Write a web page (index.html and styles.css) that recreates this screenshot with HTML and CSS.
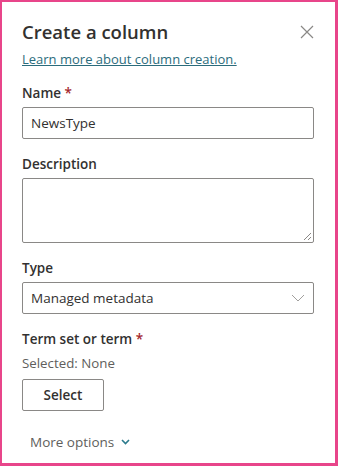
FILE: index.html
```html
<!DOCTYPE html>
<html lang="en">
<head>
    <meta charset="UTF-8">
    <meta name="viewport" content="width=device-width, initial-scale=1.0">
    <title>Create a column</title>
    <link rel="stylesheet" href="styles.css">
</head>
<body>
    <div class="frame">
        <div class="panel">
            <div class="header">
                <h1>Create a column</h1>
                <button class="close" aria-label="Close">
                    <svg width="14" height="14" viewBox="0 0 14 14">
                        <path d="M1 1 L13 13 M13 1 L1 13" stroke="#8a8886" stroke-width="1.2" fill="none"/>
                    </svg>
                </button>
            </div>
            <a class="learn" href="#">Learn more about column creation.</a>

            <label class="field-label">Name <span class="req">*</span></label>
            <div class="input">NewsType</div>

            <label class="field-label">Description</label>
            <div class="textarea">
                <svg class="grip" width="9" height="9" viewBox="0 0 9 9">
                    <path d="M8 1 L1 8 M8 5 L5 8" stroke="#8a8886" stroke-width="1" fill="none"/>
                </svg>
            </div>

            <label class="field-label">Type</label>
            <div class="dropdown">
                <span>Managed metadata</span>
                <svg width="14" height="8" viewBox="0 0 14 8">
                    <path d="M1 1 L7 7 L13 1" stroke="#a19f9d" stroke-width="1" fill="none"/>
                </svg>
            </div>

            <label class="field-label">Term set or term <span class="req">*</span></label>
            <p class="selected">Selected: None</p>
            <button class="select-btn">Select</button>

            <button class="more">
                More options
                <svg width="9" height="6" viewBox="0 0 9 6">
                    <path d="M1 1 L4.5 4.5 L8 1" stroke="#2b7a8c" stroke-width="1.6" fill="none"/>
                </svg>
            </button>
        </div>
    </div>
</body>
</html>
```

FILE: styles.css
```css
html, body {
    margin: 0;
    padding: 0;
    height: 100%;
}

body {
    font-family: 'Open Sans', 'Noto Sans', Arial, sans-serif;
    color: #323130;
    background: #fff;
}

.frame {
    box-sizing: border-box;
    height: 466px;
    width: 338px;
    border-style: solid;
    border-color: #e8458a;
    border-width: 2px 3px 3px 2px;
    overflow: hidden;
}

.panel {
    padding: 18px 22px 0 20px;
    display: flex;
    flex-direction: column;
    align-items: flex-start;
}

.header {
    width: 100%;
    display: flex;
    justify-content: space-between;
    align-items: center;
}

h1 {
    margin: 0;
    font-size: 18.5px;
    font-weight: 600;
    line-height: 24px;
    color: #323130;
}

.close {
    border: none;
    background: none;
    padding: 0;
    margin-right: -2px;
    width: 16px;
    height: 16px;
    display: flex;
    align-items: center;
    justify-content: center;
}

.learn {
    margin-top: 6px;
    font-size: 13px;
    line-height: 18px;
    color: #2b6c7c;
    text-decoration: underline;
}

.field-label {
    margin-top: 15px;
    font-size: 13.5px;
    font-weight: 600;
    line-height: 20px;
    color: #323130;
}

.req {
    color: #a4262c;
}

.input, .textarea, .dropdown {
    box-sizing: border-box;
    width: 292px;
    margin-top: 4px;
    border: 1px solid #8a8886;
    border-radius: 2px;
    background: #fff;
}

.input {
    height: 32px;
    padding: 0 8px;
    font-size: 13.5px;
    line-height: 30px;
}

.textarea {
    height: 65px;
    position: relative;
}

.grip {
    position: absolute;
    right: 1px;
    bottom: 1px;
}

.dropdown {
    height: 32px;
    padding: 0 8px;
    display: flex;
    justify-content: space-between;
    align-items: center;
    font-size: 13.5px;
}

.selected {
    margin: 5px 0 0;
    font-size: 13.3px;
    line-height: 18px;
    color: #605e5c;
}

.select-btn {
    margin-top: 7px;
    width: 82px;
    height: 32px;
    border: 1px solid #8a8886;
    border-radius: 2px;
    background: #fff;
    font-family: inherit;
    font-size: 13.5px;
    font-weight: 600;
    color: #323130;
}

.more {
    margin-top: 21px;
    margin-left: 8px;
    padding: 0;
    border: none;
    background: none;
    font-family: inherit;
    font-size: 13.5px;
    line-height: 20px;
    color: #605e5c;
    display: flex;
    align-items: center;
    gap: 7px;
}
```
